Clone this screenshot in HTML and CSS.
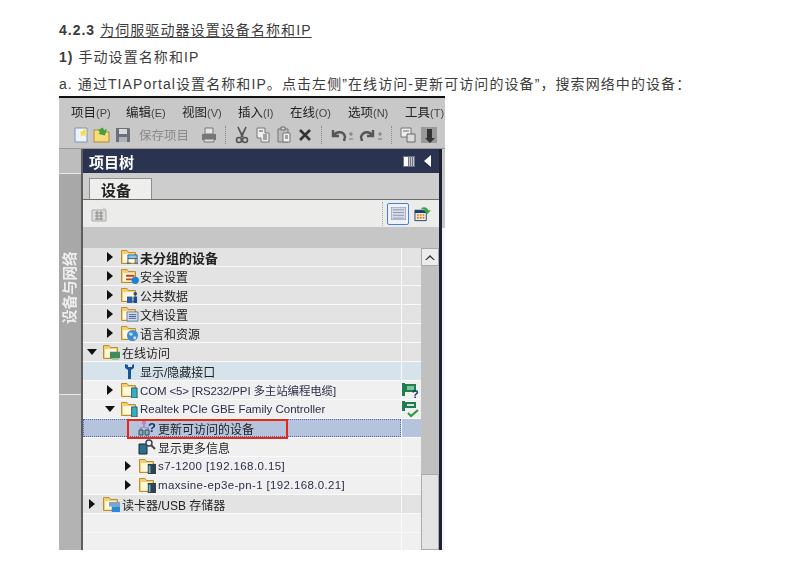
FILE: index.html
```html
<!DOCTYPE html>
<html lang="zh-CN">
<head>
<meta charset="utf-8">
<title>4.2.3</title>
<link rel="stylesheet" href="styles.css">
</head>
<body>
<svg class="defs" width="0" height="0">
  <symbol id="folder" viewBox="0 0 18 16">
    <path d="M1.500 1.500h5.500l1.500 2h7v11h-14z" fill="#f3cf72" stroke="#b98f32"/>
    <path d="M3 5h11v8.500H3z" fill="#fff8dc"/>
  </symbol>
  <symbol id="tri-r" viewBox="0 0 6 10"><path d="M0 0l6 5-6 5z" fill="#111"/></symbol>
  <symbol id="tri-d" viewBox="0 0 10 6"><path d="M0 0h10L5 6z" fill="#111"/></symbol>
</svg>

<article class="doc">
  <h2 class="line head"><b class="num">4.2.3</b> <u>为伺服驱动器设置设备名称和IP</u></h2>
  <p class="line sub"><b class="num">1)</b> 手动设置名称和IP</p>
  <p class="line para">a. 通过TIAPortal设置名称和IP。点击左侧”在线访问-更新可访问的设备”，搜索网络中的设备：</p>

  <section class="shot">
    <nav class="menu">
      <span class="mi">项目<i>(P)</i></span><span class="mi">编辑<i>(E)</i></span><span class="mi">视图<i>(V)</i></span><span class="mi">插入<i>(I)</i></span><span class="mi">在线<i>(O)</i></span><span class="mi">选项<i>(N)</i></span><span class="mi">工具<i>(T)</i></span>
    </nav>
    <div class="tools">
      <svg class="ti" viewBox="0 0 18 18"><path d="M3 2h12v14H3z" fill="#eef3fb" stroke="#7b93c0"/><path d="M11 1l1 3 3-1-2 3 3 1-3 1 1 3-3-2-2 2V8L8 6l3-1z" fill="#f6e04a"/></svg>
      <svg class="ti" viewBox="0 0 18 18"><path d="M1 4h6l1 2h8v10H1z" fill="#f6dc7e" stroke="#b58a2c"/><path d="M7 2h5v3h3l-5 5-5-5h2z" fill="#45a13a" transform="rotate(-30 10 6)"/></svg>
      <svg class="ti" viewBox="0 0 18 18"><path d="M2 2h13l1 1v13H2z" fill="#6a7078"/><path d="M5 3h8v5H5z" fill="#d8dadd"/><path d="M5 11h8v5H5z" fill="#aeb2b7"/></svg>
      <span class="save">保存项目</span>
      <svg class="ti print" viewBox="0 0 18 18"><path d="M5 2h8v6H5z" fill="#e4e4e4" stroke="#777"/><path d="M2 8h14v6H2z" fill="#777"/><path d="M4 13h10v3H4z" fill="#ddd" stroke="#777"/></svg>
      <span class="sep"></span>
      <svg class="ti" viewBox="0 0 18 18"><path d="M5 1l4 9 4-9M13 1L8 11M5 1l5 10" fill="none" stroke="#555" stroke-width="1.600"/><circle cx="6" cy="14" r="2.500" fill="none" stroke="#555" stroke-width="1.600"/><circle cx="12" cy="14" r="2.500" fill="none" stroke="#555" stroke-width="1.600"/></svg>
      <svg class="ti" viewBox="0 0 18 18"><path d="M3 2h8v5h4v9H7v-4H3z" fill="#eee" stroke="#777"/><path d="M9 9h4M9 11h4M9 13h4M5 5h4" stroke="#555"/></svg>
      <svg class="ti" viewBox="0 0 18 18"><path d="M3 3h10v13H3z" fill="#bbb" stroke="#777"/><path d="M6 1h4v3H6z" fill="#ddd" stroke="#666"/><path d="M8 7h7v9H8z" fill="#f0f0f0" stroke="#777"/><path d="M10 10h3M10 12h3" stroke="#555"/></svg>
      <svg class="ti" viewBox="0 0 18 18"><path d="M4 4l10 10M14 4L4 14" stroke="#333" stroke-width="2.600"/></svg>
      <span class="sep"></span>
      <svg class="ti wide" viewBox="0 0 26 18"><path d="M4 4v6h6M5 9c3-4 10-4 11 2l-1 4" fill="none" stroke="#555" stroke-width="2.400"/><path d="M20 8h4M22 6v4M20 13h4" stroke="#777"/></svg>
      <svg class="ti wide" viewBox="0 0 26 18"><path d="M15 4v6H9M14 9c-3-4-9-4-11 2l1 4" fill="none" stroke="#555" stroke-width="2.400"/><path d="M20 8h4M22 6v4M20 13h4" stroke="#777"/></svg>
      <span class="sep"></span>
      <svg class="ti" viewBox="0 0 18 18"><path d="M2 2h10v9H2z" fill="#eee" stroke="#777"/><path d="M8 8h8v8H8z" fill="#ddd" stroke="#666"/><path d="M4 5h6" stroke="#666"/></svg>
      <svg class="ti" viewBox="0 0 18 18"><path d="M1 1h16v16H1z" fill="#999"/><path d="M7 3h5v9h3l-5 5-5-5h2z" fill="#333"/></svg>
    </div>

    <div class="work">
      <aside class="rail">
        <div class="rail-top"></div>
        <div class="rail-mid"><span>设备与网络</span></div>
        <div class="rail-low"></div>
      </aside>
      <main class="panel">
        <header class="ptitle">
          <span>项目树</span>
          <span class="pctl">
            <svg class="pbars" viewBox="0 0 12 11"><path d="M0 0h12v11H0z" fill="#6f7484"/><path d="M1 1h4v9H1z" fill="#fff"/><path d="M6 1h1v9H6zM8 1h1v9H8zM10 1h1v9h-1z" fill="#c3c6ce"/></svg>
            <svg class="pback" viewBox="0 0 7 12"><path d="M7 0v12L0 6z" fill="#fff"/></svg>
          </span>
        </header>
        <div class="tabs"><span class="tab">设备</span></div>
        <div class="ptools">
          <svg class="pt-left" viewBox="0 0 16 16"><path d="M1 4h14v11H1z" fill="#ddd" stroke="#aaa"/><path d="M4 7h8M4 10h8M4 13h8M6 5v9M10 5v9" stroke="#888"/><path d="M11 0l1 3 3-1-2 2" fill="#bbb"/></svg>
          <span class="ptools-right">
            <span class="btn-on"><svg viewBox="0 0 16 14"><path d="M0 0h16v14H0z" fill="#d8dce8" stroke="#7f8aa6"/><path d="M2 3h12M2 6h12M2 9h12M2 12h12" stroke="#8d97b2"/></svg></span>
            <svg class="pt-go" viewBox="0 0 18 16"><path d="M1 4h12v11H1z" fill="#f5f5f5" stroke="#16406e"/><path d="M1 4h12v3H1z" fill="#16406e"/><path d="M3 8h2v2H3zM6 8h2v2H6zM9 8h2v2H9z" fill="#e89a1c"/><path d="M3 11h2v2H3zM6 11h2v2H6zM9 11h2v2H9z" fill="#d8781c"/><path d="M7 2c4-2 7-1 8 2h3l-4 4-4-4h2c-1-1-3-1-5-2z" fill="#3aa53a"/></svg>
          </span>
        </div>
        <div class="gap"></div>
        <div class="tree-wrap">
          <ul class="tree">
            <li class="row"><div class="name lv1"><svg class="ar"><use href="#tri-r"/></svg><span class="ic"><svg><use href="#folder"/></svg><svg class="ov" viewBox="0 0 14 12"><path d="M2 1h10v4H2zM2 5v6M12 5v6M1 10h4M9 10h4" fill="#8fc4e8" stroke="#1e5c96"/></svg></span><b class="zh bold">未分组的设备</b></div><div class="stat"></div></li>
            <li class="row"><div class="name lv1"><svg class="ar"><use href="#tri-r"/></svg><span class="ic"><svg><use href="#folder"/></svg><svg class="ov" viewBox="0 0 14 12"><path d="M0 2h9v2H0zM0 6h9v2H0z" fill="#c43a2a"/><circle cx="10" cy="8" r="4" fill="#1c83d0"/></svg></span><span class="zh">安全设置</span></div><div class="stat"></div></li>
            <li class="row"><div class="name lv1"><svg class="ar"><use href="#tri-r"/></svg><span class="ic"><svg><use href="#folder"/></svg><svg class="ov" viewBox="0 0 14 12"><path d="M1 5h6v7H1z" fill="#2a5db0"/><circle cx="10" cy="2" r="2" fill="#1c4f8a"/><path d="M8 5h4v7H8z" fill="#1c4f8a"/></svg></span><span class="zh">公共数据</span></div><div class="stat"></div></li>
            <li class="row"><div class="name lv1"><svg class="ar"><use href="#tri-r"/></svg><span class="ic"><svg><use href="#folder"/></svg><svg class="ov" viewBox="0 0 14 12"><path d="M1 1h12v10H1z" fill="#d6deee" stroke="#5a74a8"/><path d="M3 4h8M3 6h8M3 8h8" stroke="#3f5788"/></svg></span><span class="zh">文档设置</span></div><div class="stat"></div></li>
            <li class="row"><div class="name lv1"><svg class="ar"><use href="#tri-r"/></svg><span class="ic"><svg><use href="#folder"/></svg><svg class="ov" viewBox="0 0 14 12"><circle cx="7" cy="6" r="6" fill="#3a8ad6"/><path d="M3 3h4v3H4zM8 7h3v3H8z" fill="#c7e3f6"/></svg></span><span class="zh">语言和资源</span></div><div class="stat"></div></li>
            <li class="row"><div class="name lv0"><svg class="ar dn"><use href="#tri-d"/></svg><span class="ic"><svg><use href="#folder"/></svg><svg class="ov" viewBox="0 0 14 12"><path d="M2 3h11v7H2z" fill="#3d8d5a"/><path d="M4 10h8v2H4z" fill="#a7c7a8"/></svg></span><span class="zh">在线访问</span></div><div class="stat"></div></li>
            <li class="row blue"><div class="name lv1"><span class="ar-space"></span><span class="ic"><svg viewBox="0 0 18 16"><path d="M5 1v4l3 2v9h3V7l3-2V1l-2 1v2H8V2z" fill="#15569a"/></svg></span><span class="zh">显示/隐藏接口</span></div><div class="stat"></div></li>
            <li class="row plain"><div class="name lv1"><svg class="ar"><use href="#tri-r"/></svg><span class="ic"><svg><use href="#folder"/></svg><svg class="ov" viewBox="0 0 14 12"><path d="M6 1h6v11H6z" fill="#2fb3c4" stroke="#33506a"/></svg></span><span class="zh small com">COM &lt;5&gt; [RS232/PPI 多主站编程电缆]</span></div><div class="stat"><svg class="st" viewBox="0 0 18 18"><path d="M0 2h3v13H0zM3 3h11v8H3z" fill="#1f7d50"/><path d="M5 5h7v4H5z" fill="#7cc79a"/><text x="10" y="17" font-size="11" font-weight="700" fill="#123a68" font-family="Liberation Sans">?</text></svg></div></li>
            <li class="row plain"><div class="name lv1"><svg class="ar dn"><use href="#tri-d"/></svg><span class="ic"><svg><use href="#folder"/></svg><svg class="ov" viewBox="0 0 14 12"><path d="M6 1h6v11H6z" fill="#2fb3c4" stroke="#33506a"/></svg></span><span class="zh small">Realtek PCIe GBE Family Controller</span></div><div class="stat"><svg class="st" viewBox="0 0 18 18"><path d="M0 1h3v10H0zM3 2h11v6H3z" fill="#1f7d50"/><path d="M5 4h7v2H5z" fill="#cfe8d4"/><path d="M6 13l3 3 7-6" fill="none" stroke="#2e9c3a" stroke-width="2.200"/></svg></div></li>
            <li class="row selrow"><div class="name lv2 sel"><span class="ar-space"></span><span class="ic"><svg viewBox="0 0 18 16"><path d="M4 1h4v3H7v3h4v3H9V8H4v2H2V7h3V4H4z" fill="#b08ac8"/><path d="M1 10h4v5H1zM7 10h4v5H7z" fill="#7fb0c4" stroke="#355"/></svg><b class="q">?</b></span><span class="zh">更新可访问的设备</span></div><div class="stat"></div></li>
            <li class="row plain"><div class="name lv2"><span class="ar-space"></span><span class="ic"><svg viewBox="0 0 18 16"><path d="M1 5h8v10H1z" fill="#2d6f8f" stroke="#223"/><circle cx="11" cy="4" r="3" fill="#eef" stroke="#345" stroke-width="1.400"/><path d="M13 6l4 4" stroke="#444" stroke-width="2"/></svg></span><span class="zh">显示更多信息</span></div><div class="stat"></div></li>
            <li class="row plain"><div class="name lv2"><svg class="ar"><use href="#tri-r"/></svg><span class="ic"><svg><use href="#folder"/></svg><svg class="ov" viewBox="0 0 14 12"><path d="M4 1h9v11H4z" fill="#33424f"/><path d="M5 3h2v8H5z" fill="#55b8c8"/></svg></span><span class="zh small wide-l">s7-1200 [192.168.0.15]</span></div><div class="stat"></div></li>
            <li class="row plain"><div class="name lv2"><svg class="ar"><use href="#tri-r"/></svg><span class="ic"><svg><use href="#folder"/></svg><svg class="ov" viewBox="0 0 14 12"><path d="M4 1h9v11H4z" fill="#33424f"/><path d="M5 3h2v8H5z" fill="#55b8c8"/></svg></span><span class="zh small mid-l">maxsine-ep3e-pn-1 [192.168.0.21]</span></div><div class="stat"></div></li>
            <li class="row"><div class="name lv0"><svg class="ar"><use href="#tri-r"/></svg><span class="ic"><svg><use href="#folder"/></svg><svg class="ov" viewBox="0 0 14 12"><path d="M1 1h12v5H1z" fill="#7fa4c4"/><path d="M4 6h9v6H4z" fill="#2b8ad8"/></svg></span><span class="zh">读卡器/USB 存储器</span></div><div class="stat"></div></li>
            <li class="row plain"><div class="name"></div><div class="stat"></div></li>
            <li class="row plain"><div class="name"></div><div class="stat"></div></li>
          </ul>
          <div class="scroll">
            <span class="sbtn"><svg viewBox="0 0 10 6"><path d="M0 6l5-5 5 5-1.500 0L5 3 1.500 6z" fill="#333"/></svg></span>
            <span class="strack"></span>
            <span class="sthumb"></span>
          </div>
        </div>
      </main>
      <div class="edge"></div>
      <div class="strip"><span class="strip-top"></span></div>
    </div>
    <div class="redbox"></div>
  </section>
</article>
</body>
</html>
```

FILE: styles.css
```css
* { box-sizing: border-box; }
html, body { margin: 0; background: #fff; }
body { font-family: "Liberation Sans", "Noto Sans CJK SC", sans-serif; color: #3c3c3c; overflow: hidden; }
.defs { position: absolute; }
.doc { padding: 21px 0 0 59px; width: 789px; height: 572px; overflow: hidden; }
.line { margin: 0; font-size: 14px; font-weight: 400; height: 27px; line-height: 18px; letter-spacing: 1.080px; white-space: nowrap; }
.line b.num { font-weight: 700; letter-spacing: 1px; }
.line u { text-underline-offset: 2px; }
.para { height: 18px; }

.shot { position: relative; width: 386px; height: 454px; margin-top: 3px; background: #c8c8c8; border-top: 2px solid #111; color: #222; overflow: hidden; filter: blur(.3px); }
.menu { height: 26px; display: flex; align-items: center; padding-left: 12px; gap: 12px; font-size: 12.500px; }
.mi { white-space: nowrap; }
.mi i { font-style: normal; font-size: 11px; color: #444; }
.mi:nth-child(1) { width: 43px; }
.mi:nth-child(2) { width: 44px; }
.mi:nth-child(3) { width: 44px; }
.mi:nth-child(4) { width: 40px; }
.mi:nth-child(5) { width: 46px; }
.mi:nth-child(6) { width: 45px; }

.tools { height: 25px; display: flex; align-items: center; padding: 0 0 3px 13px; gap: 3px; border-bottom: 1px solid #9a9a9a; }
.ti { width: 18px; height: 18px; flex: none; }
.ti.wide { width: 26px; }
.ti.print { margin-left: 8px; }
.save { font-size: 12.500px; color: #8a8a8a; margin-left: 4px; white-space: nowrap; }
.sep { width: 1px; height: 18px; border-left: 1px dotted #888; margin: 0 4px; flex: none; }

.work { display: flex; height: 401px; background: #fff; }
.rail { width: 24px; flex: none; display: flex; flex-direction: column; background: #a8a8a8; border-right: 2px solid #5d5d5d; }
.rail-top { height: 25px; flex: none; background: #bdbdbd; border-bottom: 1px solid #e8e8e8; }
.rail-mid { height: 221px; flex: none; display: flex; justify-content: center; padding-top: 74px; border-bottom: 1px solid #e8e8e8; }
.rail-mid span { display: block; height: 76px; writing-mode: vertical-rl; text-orientation: sideways; transform: rotate(180deg); color: #eee; font-size: 14.500px; font-weight: 700; line-height: 16px; white-space: nowrap; }
.rail-low { flex: 1; background: #b3b3b3; }

.panel { width: 356px; flex: none; display: flex; flex-direction: column; background: #cdcdcd; }
.ptitle { height: 24px; flex: none; background: #2a3350; color: #fff; font-size: 15px; font-weight: 700; display: flex; align-items: center; justify-content: space-between; padding: 0 8px 0 6px; }
.pctl { display: flex; align-items: center; gap: 9px; }
.pbars { width: 12px; height: 11px; }
.pback { width: 7px; height: 12px; }
.tabs { height: 25px; flex: none; background: #cdcdcd; margin-top: 2px; display: flex; align-items: flex-end; border-bottom: 1px solid #6e6e6e; padding-left: 6px; }
.tab { width: 63px; height: 21px; background: #eeeeec; border: 1px solid #8f8f8f; border-bottom: 0; display: flex; align-items: center; padding-left: 11px; font-size: 15px; font-weight: 700; }
.ptools { height: 27px; flex: none; background: #ecedeb; display: flex; align-items: center; justify-content: space-between; padding: 0 8px 0 8px; }
.pt-left { width: 16px; height: 16px; }
.ptools-right { display: flex; align-items: center; gap: 5px; border-left: 1px dotted #aaa; padding-left: 4px; height: 24px; }
.btn-on { width: 22px; height: 22px; border: 1px solid #4c7fd8; border-radius: 2px; display: flex; align-items: center; justify-content: center; background: #eef2fb; }
.btn-on svg { width: 15px; height: 13px; }
.pt-go { width: 17px; height: 16px; }
.gap { height: 21px; flex: none; background: #c6c6c6; }

.tree-wrap { flex: 1; min-height: 0; display: grid; grid-template-columns: 338px 18px; background: #f0f0f0; overflow: hidden; }
.tree { list-style: none; margin: 0; padding: 0; overflow: hidden; }
.row { height: 19px; display: flex; background: #e3e3e3; border-bottom: 1px solid #fafafa; font-size: 12px; white-space: nowrap; }
.row.plain { background: #f0f0f0; }
.row.blue { background: #d6e3ea; }
.row.selrow { background: #b5c3dc; }
.name { width: 318px; flex: none; display: flex; align-items: center; }
.name.sel { border: 1px dotted #3f63c8; }
.stat { flex: 1; border-left: 1px solid #fafafa; display: flex; align-items: center; }
.st { width: 18px; height: 18px; flex: none; }
.lv0 { padding-left: 6px; }
.lv1 { padding-left: 24px; }
.lv2 { padding-left: 42px; }
.lv2.sel { padding-left: 41px; }
.ar { width: 6px; height: 10px; flex: none; margin-right: 7px; }
.ar.dn { width: 10px; height: 6px; margin: 0 5px 0 -2px; }
.ar-space { width: 13px; flex: none; }
.ic { position: relative; width: 18px; height: 16px; flex: none; margin-right: 2px; }
.ic > svg { display: block; width: 18px; height: 16px; }
.ic > svg.ov { position: absolute; right: -1px; bottom: 0; width: 13px; height: 11px; }
.q { position: absolute; left: 10px; top: 0; font-size: 13px; line-height: 16px; color: #123a68; }
.zh { color: #222; }
.zh.bold { font-size: 13px; }
.zh.small { font-size: 11.500px; color: #2b2f4a; }
.zh.com { letter-spacing: -.15px; }
.zh.wide-l { letter-spacing: .4px; }
.zh.mid-l { letter-spacing: .35px; }

.scroll { background: #c0c0c0; display: flex; flex-direction: column; }
.sbtn { height: 18px; flex: none; background: #ececec; border: 1px solid #aaa; display: flex; align-items: center; justify-content: center; }
.sbtn svg { width: 10px; height: 6px; }
.strack { height: 208px; flex: none; }
.sthumb { flex: 1; background: #e4e4e4; border: 1px solid #aaa; }

.edge { width: 3px; flex: none; background: #1d2233; }
.strip { flex: 1; background: #f6f6f6; display: flex; flex-direction: column; }
.strip-top { height: 79px; background: #c8c8c8; }

.redbox { position: absolute; left: 68px; top: 321px; width: 161px; height: 20px; border: 2px solid #e8290f; }
```
